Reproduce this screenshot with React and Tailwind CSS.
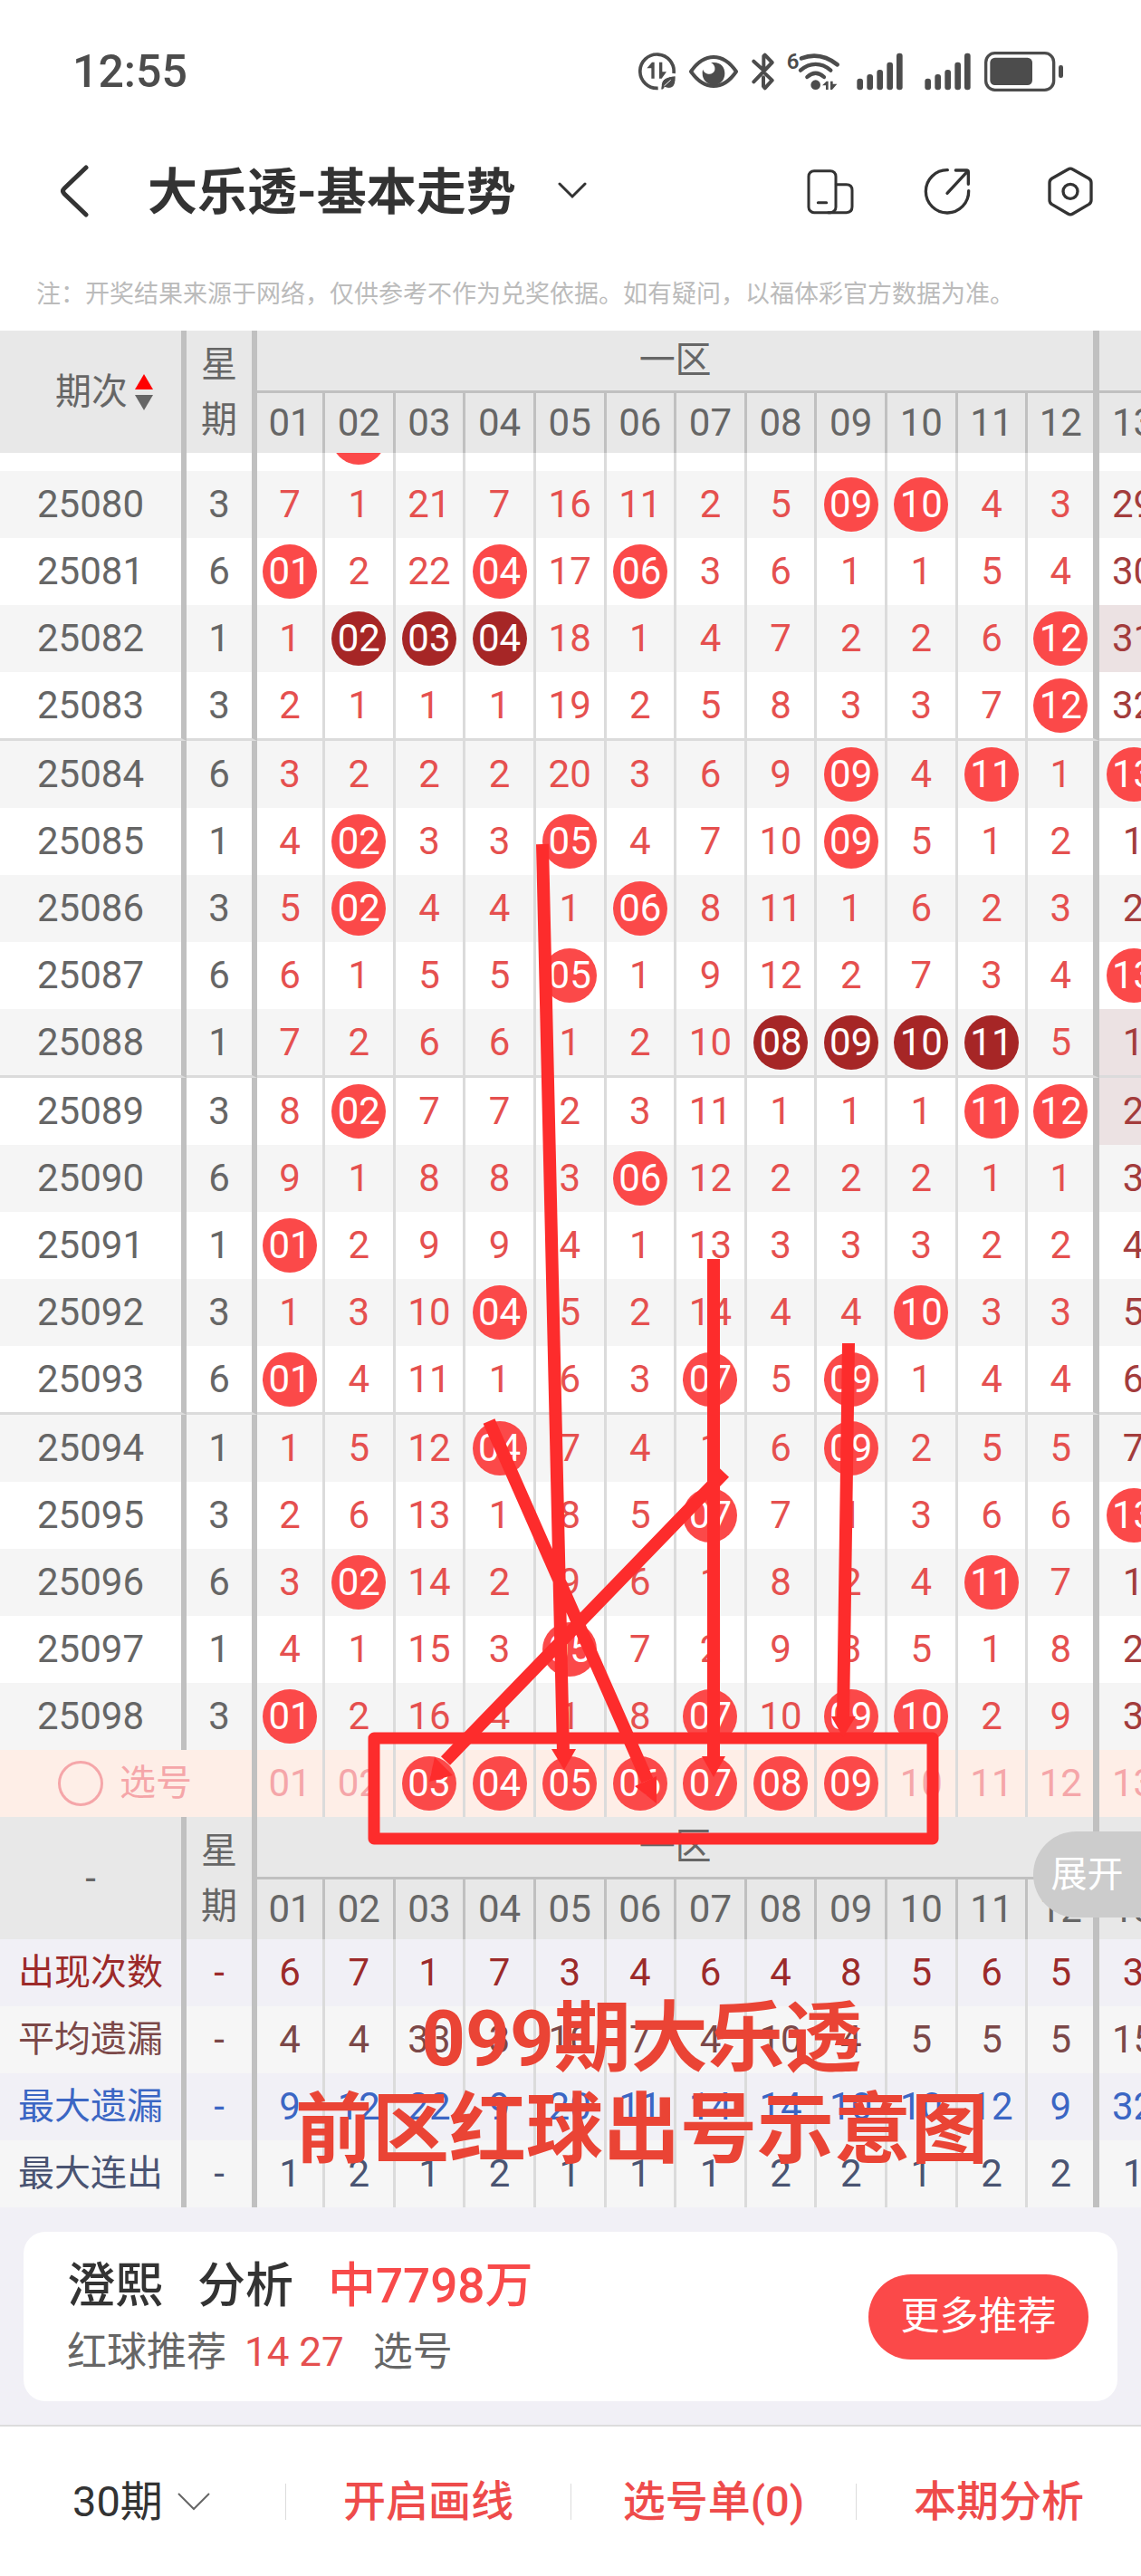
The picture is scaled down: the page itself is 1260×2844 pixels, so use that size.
import React, { useState } from 'react';

const COLUMNS = ['01', '02', '03', '04', '05', '06', '07', '08', '09', '10', '11', '12', '13'];

// "b" marks a drawn ball, "d" a ball that is part of a consecutive run, "s" a shaded cell
const DRAWS = [
  { issue: '25080', day: 3, cells: '7 1 21 7 16 11 2 5 b09 b10 4 3 29' },
  { issue: '25081', day: 6, cells: 'b01 2 22 b04 17 b06 3 6 1 1 5 4 30' },
  { issue: '25082', day: 1, cells: '1 d02 d03 d04 18 1 4 7 2 2 6 b12 s31' },
  { issue: '25083', day: 3, cells: '2 1 1 1 19 2 5 8 3 3 7 b12 32', last: true },
  { issue: '25084', day: 6, cells: '3 2 2 2 20 3 6 9 b09 4 b11 1 b13' },
  { issue: '25085', day: 1, cells: '4 b02 3 3 b05 4 7 10 b09 5 1 2 1' },
  { issue: '25086', day: 3, cells: '5 b02 4 4 1 b06 8 11 1 6 2 3 2' },
  { issue: '25087', day: 6, cells: '6 1 5 5 b05 1 9 12 2 7 3 4 b13' },
  { issue: '25088', day: 1, cells: '7 2 6 6 1 2 10 d08 d09 d10 d11 5 s1', last: true },
  { issue: '25089', day: 3, cells: '8 b02 7 7 2 3 11 1 1 1 b11 b12 s2' },
  { issue: '25090', day: 6, cells: '9 1 8 8 3 b06 12 2 2 2 1 1 3' },
  { issue: '25091', day: 1, cells: 'b01 2 9 9 4 1 13 3 3 3 2 2 4' },
  { issue: '25092', day: 3, cells: '1 3 10 b04 5 2 14 4 4 b10 3 3 5' },
  { issue: '25093', day: 6, cells: 'b01 4 11 1 6 3 b07 5 b09 1 4 4 6', last: true },
  { issue: '25094', day: 1, cells: '1 5 12 b04 7 4 1 6 b09 2 5 5 7' },
  { issue: '25095', day: 3, cells: '2 6 13 1 8 5 b07 7 1 3 6 6 b13' },
  { issue: '25096', day: 6, cells: '3 b02 14 2 9 6 1 8 2 4 b11 7 1' },
  { issue: '25097', day: 1, cells: '4 1 15 3 b05 7 2 9 3 5 1 8 2' },
  { issue: '25098', day: 3, cells: 'b01 2 16 4 1 8 b07 10 b09 b10 2 9 3' },
];

const STATS = [
  { label: '出现次数', color: 'text-[#9c2a2a]', bg: 'bg-[#f1f0f6]', values: '6 7 1 7 3 4 6 4 8 5 6 5 3' },
  { label: '平均遗漏', color: 'text-[#7b4848]', bg: 'bg-[#f6f6f6]', values: '4 4 33 3 10 7 4 10 4 5 5 5 15' },
  { label: '最大遗漏', color: 'text-[#3b66c4]', bg: 'bg-[#f1f0f6]', values: '9 12 22 9 20 11 14 14 10 10 12 9 32' },
  { label: '最大连出', color: 'text-[#4a5472]', bg: 'bg-[#f6f6f6]', values: '1 2 1 2 1 1 1 2 2 1 2 2 1' },
];

const edge = (i) => (i === 11 ? 'border-r-[7px] border-r-[#c0c0c0]' : 'border-r-[3px] border-r-[#dbdbdb]');
const headEdge = (i) => (i === 11 ? 'border-r-[7px] border-[#c0c0c0]' : 'border-r-[3px] border-[#c0c0c0]');

function SignalIcon() {
  return (
    <svg className="h-[44px] w-[51px]" viewBox="801 78 153 132" fill="#4c4c4c">
      <rect x="802" y="167" width="20" height="38" rx="9" />
      <rect x="835" y="153" width="20" height="52" rx="9" />
      <rect x="868" y="138" width="20" height="67" rx="9" />
      <rect x="901" y="113" width="20" height="92" rx="9" />
      <rect x="933" y="83" width="20" height="122" rx="9" />
    </svg>
  );
}

function StatusBar() {
  return (
    <div className="flex h-[158px] items-center justify-between pl-20 pr-[86px] text-[#4c4c4c]">
      <span className="text-[50px] font-medium leading-[60px]">12:55</span>
      <div className="flex items-center gap-[15px]">
        <svg className="h-[44px] w-[41px]" viewBox="69 78 123 132" fill="none">
          <path d="M134 199A56 56 0 1 1 186 150" stroke="#4c4c4c" strokeWidth="11" />
          <path d="M97 133l17-20h8v54h-10v-34zM138 113h10v32h14l-16 22h-8z" fill="#4c4c4c" />
          <path d="M192 158c-30 2-46 12-47 30l-2 16h8l5-8c30 12 38-12 36-38zM154 192l22-20" fill="#4c4c4c" stroke="#fff" strokeWidth="3" />
        </svg>
        <svg className="h-[44px] w-[54px]" viewBox="240 78 162 132" fill="none">
          <path d="M246 144C268 112 294 96 321 96s53 16 75 48c-22 32-48 48-75 48s-53-16-75-48z" stroke="#4c4c4c" strokeWidth="12" strokeLinejoin="round" />
          <path d="M312 115c30-5 46 12 46 35 0 22-14 38-36 38s-38-16-38-38c0-5 0-9 2-13 4 18 34 22 39 2 2-10-3-20-13-24z" fill="#4c4c4c" />
        </svg>
        <svg className="h-[44px] w-[25px]" viewBox="449 78 75 132" fill="none" stroke="#4c4c4c" strokeWidth="12" strokeLinecap="round" strokeLinejoin="round">
          <path d="M456 110l28 26M456 178l61-64-24-25-4 4v35M495 152l22 21-24 26-5-6v-30" />
        </svg>
        <svg className="h-[44px] w-[57px] overflow-visible" viewBox="566 78 171 132" fill="none">
          <text x="562" y="136" fontSize="72" fontWeight="600" fontFamily="Roboto, sans-serif" fill="#4c4c4c">6</text>
          <path d="M611 100c42-16 82-8 119 21" stroke="#4c4c4c" strokeWidth="14" strokeLinecap="round" />
          <path d="M608 140c31-27 69-27 100 0M630 162c18-16 38-16 56 0" stroke="#4c4c4c" strokeWidth="13" strokeLinecap="round" />
          <circle cx="658" cy="188" r="16" fill="#4c4c4c" />
          <path d="M680 190l14-14h6v28h-8v-14zM707 176h8v9h14l-16 19h-6z" fill="#4c4c4c" />
        </svg>
        <div className="flex gap-6 pl-1">
          <SignalIcon />
          <SignalIcon />
        </div>
        <svg className="h-[44px] w-[87px]" viewBox="1227 78 261 132">
          <rect x="1232" y="83" width="225" height="122" rx="30" fill="none" stroke="#4c4c4c" strokeWidth="10" />
          <rect x="1246" y="98" width="140" height="91" rx="16" fill="#4c4c4c" />
          <rect x="1473" y="123" width="15" height="42" rx="7" fill="#4c4c4c" />
        </svg>
      </div>
    </div>
  );
}

function TitleBar() {
  return (
    <header className="flex h-[106px] items-center justify-between pl-[65px] pr-[53px] text-[#333]">
      <div className="flex items-center">
        <button type="button" aria-label="返回" className="mr-16">
          <svg className="h-[60px] w-[34px]" viewBox="0 0 34 60" fill="none" stroke="currentColor" strokeWidth="5" strokeLinecap="round" strokeLinejoin="round">
            <path d="M30 4L6 27q-3 3 0 6l24 23" />
          </svg>
        </button>
        <h1 className="pt-0.5 text-[55px] font-bold leading-[72px]">大乐透-基本走势</h1>
        <button type="button" aria-label="切换走势" className="ml-[46px]">
          <svg className="h-[20px] w-[32px]" viewBox="0 0 32 20" fill="none" stroke="currentColor" strokeWidth="3" strokeLinecap="round">
            <path d="M2 2l14 14 14-14" />
          </svg>
        </button>
      </div>
      <div className="flex items-center">
        <button type="button" aria-label="横屏" className="mr-[77px]">
          <svg className="h-[55px] w-[52px]" viewBox="91 75 156 165" fill="none" stroke="currentColor" strokeWidth="9" strokeLinecap="round">
            <rect x="97" y="89" width="90" height="138" rx="18" />
            <path d="M188 134h34q19 0 19 19v55q0 19-19 19h-60" />
            <path d="M128 194h28" />
          </svg>
        </button>
        <button type="button" aria-label="分享" className="mr-[85px]">
          <svg className="h-[55px] w-[52px]" viewBox="478 75 156 165" fill="none" stroke="currentColor" strokeWidth="10" strokeLinecap="round" strokeLinejoin="round">
            <path d="M557 86A71 71 0 1 0 627 155" />
            <path d="M584 87h36q6 0 6 6v40M622 92l-66 71" />
          </svg>
        </button>
        <button type="button" aria-label="设置">
          <svg className="h-[55px] w-[50px]" viewBox="891 75 150 165" fill="none" stroke="currentColor" strokeWidth="10" strokeLinejoin="round">
            <path d="M958 84q8-5 16 0l53 30q8 5 8 14v58q0 9-8 14l-53 31q-8 5-16 0l-53-31q-8-5-8-14v-58q0-9 8-14z" />
            <circle cx="966" cy="157" r="24" />
          </svg>
        </button>
      </div>
    </header>
  );
}

function Ball({ dark, children }) {
  return (
    <span
      className={`mx-auto flex size-[60px] shrink-0 items-center justify-center rounded-full text-white ${dark ? 'bg-[#a62626]' : 'bg-[#fb4949]'}`}
    >
      {children}
    </span>
  );
}

function HeadRows({ first }) {
  return (
    <>
      <tr className="bg-[#e8e8e8] text-[#666]">
        <th rowSpan={2} className="border-r-[6px] border-[#c0c0c0] p-0 font-normal">{first}</th>
        <th rowSpan={2} className="border-r-[6px] border-[#c0c0c0] p-0 text-[40px] font-normal leading-[61px]">
          星<br />期
        </th>
        <th colSpan={12} className="h-[69px] border-b-[3px] border-r-[7px] border-[#c0c0c0] p-0 text-[40px] font-normal">一区</th>
        <th className="border-b-[3px] border-[#c0c0c0] p-0"></th>
      </tr>
      <tr className="bg-[#e8e8e8] text-[#666]">
        {COLUMNS.map((n, i) => (
          <th key={n} className={`h-[66px] p-0 font-normal ${headEdge(i)}`}>{n}</th>
        ))}
      </tr>
    </>
  );
}

function DrawRow({ draw, index }) {
  const line = draw.last ? 'h-[76px] border-b-[3px] border-b-[#dbdbdb]' : 'h-[74px]';
  return (
    <tr className={index % 2 === 0 ? 'bg-[#f5f5f5]' : 'bg-white'}>
      <td className={`border-r-[6px] border-r-[#c0c0c0] p-0 text-[#666] ${line}`}>{draw.issue}</td>
      <td className={`border-r-[6px] border-r-[#c0c0c0] p-0 text-[#666] ${line}`}>{draw.day}</td>
      {draw.cells.split(' ').map((cell, i) => {
        const kind = cell[0];
        const isBall = kind === 'b' || kind === 'd';
        return (
          <td
            key={i}
            className={`p-0 ${i === 12 ? 'text-[#a33c3c]' : 'text-[#e5504f]'} ${kind === 's' ? 'bg-[#ece2e3]' : ''} ${edge(i)} ${line}`}
          >
            {isBall ? <Ball dark={kind === 'd'}>{cell.slice(1)}</Ball> : cell.replace('s', '')}
          </td>
        );
      })}
    </tr>
  );
}

// Hand-drawn marks over the chart
function Marks() {
  return (
    <svg className="pointer-events-none absolute left-0 top-0 h-[2072px] w-[1260px]" viewBox="0 365 1260 2072" fill="none" stroke="#fd2c2c" strokeWidth="14">
      <path d="M599 932L622 1935M788 1390L788 1942M937 1483L931 1898M540 1569L715 1966M800 1626L492 1944" />
      <rect x="413" y="1919" width="617" height="111" strokeWidth="13" strokeLinejoin="round" />
      <g fill="#fd2c2c" stroke="none">
        <path d="M609 1931h27l-13 23z" />
        <path d="M775 1939h26l-13 23z" />
        <path d="M918 1895h27l-14 23z" />
        <path d="M701 1972l24-11v30z" />
        <path d="M480 1940l20 20-26 7z" />
      </g>
    </svg>
  );
}

function TrendChart() {
  const [picked, setPicked] = useState(['03', '04', '05', '06', '07', '08', '09']);

  const toggle = (n) => {
    setPicked(picked.includes(n) ? picked.filter((p) => p !== n) : [...picked, n]);
  };

  return (
    <section className="relative overflow-hidden">
      <table className="w-[1292px] table-fixed border-separate border-spacing-0 text-center text-[42px] leading-[48px]">
        <colgroup>
          <col className="w-[206px]" />
          <col className="w-[78px]" />
          <col className="w-[75px]" />
          {COLUMNS.slice(1, 11).map((n) => <col key={n} />)}
          <col className="w-[79px]" />
          <col />
        </colgroup>
        <thead>
          <HeadRows
            first={
              <button type="button" className="flex items-center gap-2 pl-[61px] text-[40px]">
                期次
                <svg className="h-[40px] w-[20px]" viewBox="0 0 20 40">
                  <path d="M10 0l10 17H0z" fill="#ff0000" />
                  <path d="M10 40L0 23h20z" fill="#666" />
                </svg>
              </button>
            }
          />
        </thead>
        <tbody>
          <tr className="bg-white">
            <td className="border-r-[6px] border-[#c0c0c0] p-0"></td>
            <td className="border-r-[6px] border-[#c0c0c0] p-0"></td>
            {COLUMNS.map((n, i) => (
              <td key={n} className={`p-0 ${edge(i)}`}>
                <div className="flex h-5 items-end overflow-hidden pb-[7px]">
                  {n === '02' && <Ball />}
                </div>
              </td>
            ))}
          </tr>
          {DRAWS.map((draw, i) => (
            <DrawRow key={draw.issue} draw={draw} index={i} />
          ))}
          <tr className="bg-[#feeee7] text-[#f5a6a9]">
            <td colSpan={2} className="h-[74px] border-r-[6px] border-[#c0c0c0] p-0">
              <label className="flex items-center gap-[18px] pl-16 text-[40px]">
                <input type="checkbox" className="size-[50px] appearance-none rounded-full border-[3px] border-[#f5a6a9]" />
                选号
              </label>
            </td>
            {COLUMNS.map((n, i) => (
              <td key={n} className={`h-[74px] p-0 ${edge(i)}`}>
                <button type="button" className="mx-auto block" onClick={() => toggle(n)}>
                  {picked.includes(n) ? <Ball>{n}</Ball> : n}
                </button>
              </td>
            ))}
          </tr>
          <HeadRows first="-" />
          {STATS.map((stat) => (
            <tr key={stat.label} className={`${stat.bg} ${stat.color}`}>
              <td className="h-[74px] border-r-[6px] border-[#c0c0c0] p-0 text-[40px]">{stat.label}</td>
              <td className="border-r-[6px] border-[#c0c0c0] p-0">-</td>
              {stat.values.split(' ').map((v, i) => (
                <td key={i} className={`p-0 ${edge(i)}`}>{v}</td>
              ))}
            </tr>
          ))}
        </tbody>
      </table>
      <Marks />
      <p className="pointer-events-none absolute left-[326px] top-[1836px] w-[765px] text-center text-[85px] font-bold leading-[101px] text-[#ea4435]">
        099期大乐透<br />前区红球出号示意图
      </p>
      <button type="button" className="absolute right-0 top-[1657px] h-[95px] w-[119px] rounded-l-full bg-[#ccc] text-[40px] text-white">
        展开
      </button>
    </section>
  );
}

function Recommend() {
  return (
    <section className="bg-[#f1f0f6] px-[26px] pb-[26px] pt-[27px]">
      <div className="flex items-center justify-between rounded-3xl bg-white pl-12 pr-8">
        <div className="pb-[17px] pt-6">
          <p className="flex gap-[38px] text-[53px] font-medium leading-[72px] text-[#333]">
            <span>澄熙</span>
            <span>分析</span>
            <span className="text-[#f84a4a]">中7798万</span>
          </p>
          <p className="flex text-[44px] leading-[74px] text-[#666]">
            <span>红球推荐</span>
            <span className="ml-5 text-[#e5504f]">14 27</span>
            <span className="ml-8">选号</span>
          </p>
        </div>
        <button type="button" className="h-[94px] w-[243px] rounded-full bg-[#fb4949] text-[43px] text-white">
          更多推荐
        </button>
      </div>
    </section>
  );
}

function BottomBar() {
  return (
    <nav className="grid h-[167px] grid-cols-4 items-center border-t-2 border-[#dcdcdc] bg-white text-[47px] leading-[56px] text-[#ee4b4b]">
      <button type="button" className="flex items-center gap-4 pl-20 text-[#333]">
        30期
        <svg className="h-[20px] w-[36px]" viewBox="0 0 36 20" fill="none" stroke="#666" strokeWidth="2">
          <path d="M1 1l17 17L35 1" />
        </svg>
      </button>
      {['开启画线', '选号单(0)', '本期分析'].map((label) => (
        <div key={label} className="flex items-center">
          <span className="h-10 w-px bg-[#dcdcdc]" />
          <button type="button" className="grow font-medium">{label}</button>
        </div>
      ))}
    </nav>
  );
}

export default function App() {
  return (
    <main className="w-full overflow-hidden bg-white font-[Roboto,'Noto_Sans_CJK_SC',sans-serif]">
      <StatusBar />
      <TitleBar />
      <p className="pb-5 pl-10 pt-[41px] text-[27px] leading-10 text-[#bbb]">
        注：开奖结果来源于网络，仅供参考不作为兑奖依据。如有疑问，以福体彩官方数据为准。
      </p>
      <TrendChart />
      <Recommend />
      <BottomBar />
    </main>
  );
}
